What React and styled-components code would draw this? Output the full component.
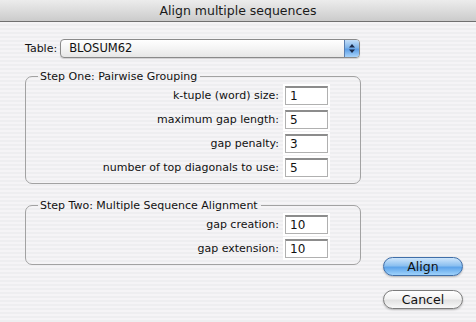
import React from 'react';
import styled, { createGlobalStyle } from 'styled-components';

const GlobalStyle = createGlobalStyle`
	html, body {
		margin: 0;
		padding: 0;
		background: #ececec;
	}
	* {
		box-sizing: border-box;
	}
`;

const stepOne = [
	{ label: 'k-tuple (word) size:', value: '1' },
	{ label: 'maximum gap length:', value: '5' },
	{ label: 'gap penalty:', value: '3' },
	{ label: 'number of top diagonals to use:', value: '5' },
];

const stepTwo = [
	{ label: 'gap creation:', value: '10' },
	{ label: 'gap extension:', value: '10' },
];

const App = () => {
	return (
		<>
			<GlobalStyle />
			<Window>
				<TitleBar>Align multiple sequences</TitleBar>
				<Body>
					<TableRow>
						<Label>Table:</Label>
						<Popup>
							<PopupText>BLOSUM62</PopupText>
							<PopupArrows>
								<svg width='8' height='11' viewBox='0 0 8 11'>
									<path d='M4 1 L7 4.5 L1 4.5 Z' fill='#1b2a4a' />
									<path d='M4 10 L7 6.5 L1 6.5 Z' fill='#1b2a4a' />
								</svg>
							</PopupArrows>
						</Popup>
					</TableRow>

					<Group $top={13}>
						<Legend>Step One: Pairwise Grouping</Legend>
						{stepOne.map((row) => (
							<Row key={row.label}>
								<Label>{row.label}</Label>
								<Field defaultValue={row.value} readOnly />
							</Row>
						))}
					</Group>

					<Bottom>
						<Group $top={0}>
							<Legend>Step Two: Multiple Sequence Alignment</Legend>
							{stepTwo.map((row) => (
								<Row key={row.label}>
									<Label>{row.label}</Label>
									<Field defaultValue={row.value} readOnly />
								</Row>
							))}
						</Group>
						<Buttons>
							<Button $primary>Align</Button>
							<Button>Cancel</Button>
						</Buttons>
					</Bottom>
				</Body>
			</Window>
		</>
	);
};

export default App;

const Window = styled.div`
	width: 476px;
	height: 322px;
	overflow: hidden;
	font-family: 'DejaVu Sans', 'Liberation Sans', sans-serif;
	color: #111;
	background: repeating-linear-gradient(
		to bottom,
		#eeeef0 0px,
		#eeeef0 2px,
		#f5f4f6 2px,
		#f5f4f6 4px
	);
`;

const TitleBar = styled.div`
	height: 22px;
	display: flex;
	align-items: center;
	justify-content: center;
	font-size: 12.5px;
	color: #1a1a1a;
	background: linear-gradient(to bottom, #ececec 0%, #dcdcdc 50%, #cbcbcb 100%);
	border-bottom: 1px solid #707070;
`;

const Body = styled.div`
	padding: 17px 0 0 25px;
`;

const TableRow = styled.div`
	display: flex;
	align-items: center;
	gap: 3px;
	height: 19px;
`;

const Label = styled.span`
	font-size: 11px;
	white-space: nowrap;
`;

const Popup = styled.div`
	width: 300px;
	height: 19px;
	display: flex;
	align-items: stretch;
	border: 1px solid #8a8a8a;
	border-radius: 4px;
	background: linear-gradient(to bottom, #ffffff 0%, #f4f4f4 50%, #e6e6e6 100%);
	box-shadow: 0 1px 1px rgba(0, 0, 0, 0.15);
	overflow: hidden;
`;

const PopupText = styled.span`
	flex: 1;
	padding-left: 8px;
	font-size: 11.5px;
	line-height: 17px;
`;

const PopupArrows = styled.span`
	width: 15px;
	display: flex;
	align-items: center;
	justify-content: center;
	border-left: 1px solid #5a7fb0;
	background: linear-gradient(to bottom, #c4def8 0%, #7fb4ea 45%, #5d9ee6 55%, #a9d4fb 100%);
`;

const Group = styled.fieldset`
	margin: ${(p) => p.$top}px 0 0 0;
	width: 336px;
	padding: 4px 32px 6px 0;
	border: 1px solid #a2a2a2;
	border-radius: 7px;
	display: flex;
	flex-direction: column;
	gap: 5px;
`;

const Legend = styled.legend`
	margin-left: 12px;
	padding: 0 3px 0 2px;
	font-size: 11px;
	line-height: 11px;
`;

const Row = styled.div`
	display: flex;
	align-items: center;
	justify-content: flex-end;
	gap: 6px;
`;

const Field = styled.input`
	width: 43px;
	height: 19px;
	padding: 0 0 0 4px;
	font-family: 'DejaVu Sans', sans-serif;
	font-size: 12px;
	color: #111;
	background: #fff;
	border: 1px solid #b0b0b0;
	border-top: 2px solid #8c8c8c;
	outline: 2px solid #fff;
`;

const Bottom = styled.div`
	margin-top: 16px;
	display: flex;
	align-items: flex-start;
`;

const Buttons = styled.div`
	margin: 57px 0 0 22px;
	display: flex;
	flex-direction: column;
	gap: 14px;
`;

const Button = styled.div`
	width: 80px;
	height: 19px;
	display: flex;
	align-items: center;
	justify-content: center;
	font-size: 12.5px;
	border-radius: 10px;
	border: 1px solid ${(p) => (p.$primary ? '#3f6ea8' : '#7c7c7c')};
	background: ${(p) =>
		p.$primary
			? 'linear-gradient(to bottom, #cfe6fb 0%, #8cc0f0 45%, #5ea4ea 55%, #9fd2fb 100%)'
			: 'linear-gradient(to bottom, #ffffff 0%, #f2f2f2 45%, #e2e2e2 55%, #f8f8f8 100%)'};
	box-shadow: 0 1px 2px rgba(0, 0, 0, 0.25);
`;
